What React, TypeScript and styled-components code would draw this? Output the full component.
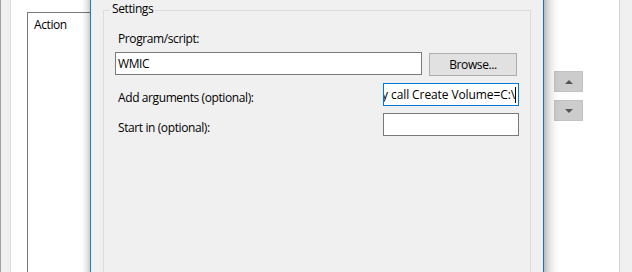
import React from 'react';
import styled, { createGlobalStyle } from 'styled-components';

const GlobalStyle = createGlobalStyle`
    html, body {
        margin: 0;
        padding: 0;
        width: 632px;
        height: 272px;
        overflow: hidden;
        background: #f0f0f0;
    }
    * {
        box-sizing: border-box;
    }
`;

const FONT = `"Open Sans", "Noto Sans", sans-serif`;

const Desktop = styled.div`
    position: relative;
    display: flex;
    width: 632px;
    height: 272px;
    overflow: hidden;
    font-family: ${FONT};
    font-size: 12px;
    letter-spacing: -0.4px;
    color: #000;
`;

// ---- window behind the dialog ----

const SideStrip = styled.div<{ $side: 'left' | 'right' }>`
    width: ${(p) => (p.$side === 'left' ? 11 : 13)}px;
    flex-shrink: 0;
    background: #f0f0f0;
    border-left: 1px solid ${(p) => (p.$side === 'left' ? '#a0a0a0' : '#d4d4d4')};
    ${(p) => (p.$side === 'left' ? 'border-right: 1px solid #dadada;' : '')}
`;

const BackPane = styled.div`
    flex: 1;
    display: flex;
    background: #fff;
    padding: 12px 0 0 16px;
`;

const ListBox = styled.div`
    width: 516px;
    flex-shrink: 0;
    border: 1px solid #7a7a7a;
    border-bottom: none;
    padding: 4px 6px;
    line-height: 16px;
`;

const MoveButtons = styled.div`
    display: flex;
    flex-direction: column;
    gap: 8px;
    padding: 59px 0 0 11px;
`;

const MoveButton = styled.div`
    width: 29px;
    height: 21px;
    background: #cccccc;
    border: 1px solid #c2c2c2;
    display: flex;
    align-items: center;
    justify-content: center;
`;

const Arrow = styled.div<{ $dir: 'up' | 'down' }>`
    width: 0;
    height: 0;
    border-left: 4px solid transparent;
    border-right: 4px solid transparent;
    ${(p) =>
        p.$dir === 'up'
            ? 'border-bottom: 4px solid #555;'
            : 'border-top: 4px solid #555;'}
`;

// ---- dialog window ----

const Dialog = styled.div`
    position: absolute;
    left: 90px;
    top: -60px;
    width: 454px;
    height: 420px;
    background: #f0f0f0;
    border-left: 1px solid #1a7fd4;
    border-right: 1px solid #1a6fc0;
    box-shadow: 3px 0 12px rgba(0, 0, 0, 0.32), -1px 0 7px rgba(0, 0, 0, 0.18);
    padding: 70px 12px 0 12px;
`;

const GroupBox = styled.div`
    position: relative;
    height: 400px;
    border: 1px solid #dcdcdc;
    padding: 20px 11px 0 11px;
    display: flex;
    flex-direction: column;
`;

const GroupTitle = styled.span`
    position: absolute;
    left: 6px;
    top: -10px;
    padding: 0 2px;
    background: #f0f0f0;
    line-height: 16px;
`;

const Label = styled.div`
    padding-left: 3px;
    line-height: 16px;
    white-space: nowrap;
`;

const Row = styled.div<{ $top: number }>`
    display: flex;
    align-items: flex-end;
    margin-top: ${(p) => p.$top}px;
`;

const TextBox = styled.div<{ $width: number; $focused?: boolean }>`
    width: ${(p) => p.$width}px;
    height: 23px;
    background: #fff;
    border: 1px solid ${(p) => (p.$focused ? '#0078d7' : '#7a7a7a')};
    display: flex;
    align-items: center;
    justify-content: ${(p) => (p.$focused ? 'flex-end' : 'flex-start')};
    padding: 0 2px;
    overflow: hidden;
    white-space: nowrap;
    line-height: 16px;
    ${(p) => (p.$focused ? 'letter-spacing: -0.1px;' : '')}
`;

const Caret = styled.span`
    display: inline-block;
    width: 1px;
    height: 16px;
    background: #000;
    flex-shrink: 0;
`;

const Button = styled.div`
    width: 88px;
    height: 23px;
    margin: 0 0 -1px 7px;
    background: #e1e1e1;
    border: 1px solid #adadad;
    display: flex;
    align-items: center;
    justify-content: center;
    line-height: 16px;
`;

const Spacer = styled.div`
    flex: 1;
`;

const App: React.FC = () => {
    return (
        <>
            <GlobalStyle />
            <Desktop>
                <SideStrip $side="left" />
                <BackPane>
                    <ListBox>Action</ListBox>
                    <MoveButtons>
                        <MoveButton>
                            <Arrow $dir="up" />
                        </MoveButton>
                        <MoveButton>
                            <Arrow $dir="down" />
                        </MoveButton>
                    </MoveButtons>
                </BackPane>
                <SideStrip $side="right" />

                <Dialog>
                    <GroupBox>
                        <GroupTitle>Settings</GroupTitle>
                        <Label>Program/script:</Label>
                        <Row $top={5}>
                            <TextBox $width={307}>WMIC</TextBox>
                            <Button>Browse...</Button>
                        </Row>
                        <Row $top={8}>
                            <Label>Add arguments (optional):</Label>
                            <Spacer />
                            <TextBox $width={136} $focused>
                                shadowcopy call Create Volume=C:\
                                <Caret />
                            </TextBox>
                        </Row>
                        <Row $top={7}>
                            <Label>Start in (optional):</Label>
                            <Spacer />
                            <TextBox $width={136} />
                        </Row>
                    </GroupBox>
                </Dialog>
            </Desktop>
        </>
    );
};

export default App;
